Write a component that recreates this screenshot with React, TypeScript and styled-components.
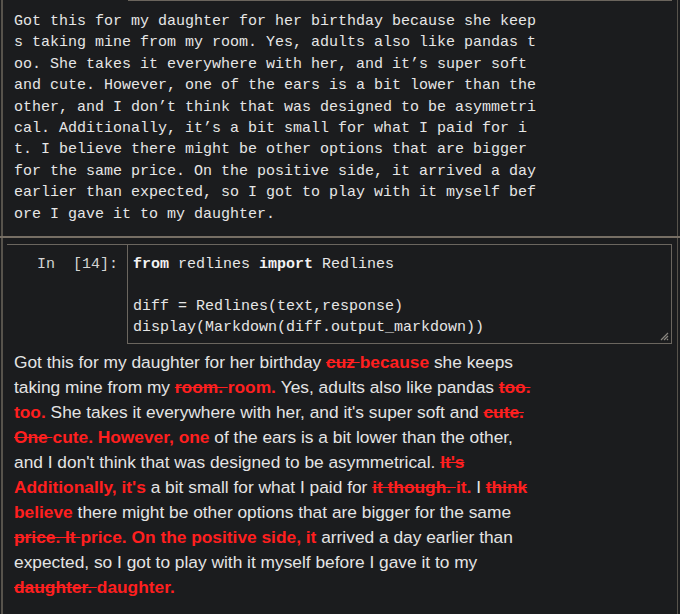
import styled, { createGlobalStyle } from "styled-components";

const GlobalStyle = createGlobalStyle`
  html, body {
    margin: 0;
    padding: 0;
    background: #1b1c1e;
  }
  body {
    width: 680px;
    height: 614px;
    overflow: hidden;
  }
`;

const Section = styled.div<{ $height: number }>`
  box-sizing: border-box;
  margin-left: 1px;
  width: 677px;
  height: ${(p) => p.$height}px;
  border-left: 2px solid #57534c;
  border-right: 1px solid #57534c;
  overflow: hidden;
`;

const PrevCellEdge = styled.div`
  margin-left: 125px;
  width: 544px;
  border-top: 1px solid #6b655d;
`;

const MonoOutput = styled.div`
  width: 58ch;
  padding: 10px 0 0 11px;
  font-family: "Liberation Mono", "DejaVu Sans Mono", monospace;
  font-size: 15px;
  line-height: 21.4px;
  color: #e6e6e6;
  word-break: break-all;
`;

const Separator = styled.div`
  height: 2px;
  background: #766e64;
`;

const InputRow = styled.div`
  display: flex;
  margin: 6px 0 0 4px;
`;

const Prompt = styled.div`
  box-sizing: border-box;
  width: 120px;
  padding: 9px 9px 0 0;
  border-top: 1px solid #6b665f;
  text-align: right;
  white-space: pre;
  font-family: "Liberation Mono", "DejaVu Sans Mono", monospace;
  font-size: 15px;
  line-height: 21px;
  color: #d4d4d4;
`;

const CodeBox = styled.div`
  position: relative;
  box-sizing: border-box;
  width: 545px;
  padding: 9px 6px 5px 5px;
  border: 1px solid #6b665f;
`;

const Code = styled.pre`
  margin: 0;
  font-family: "Liberation Mono", "DejaVu Sans Mono", monospace;
  font-size: 15px;
  line-height: 21px;
  color: #e6e6e6;
`;

const Keyword = styled.b`
  font-weight: 700;
  color: #f2f2f2;
`;

const ResizeGrip = styled.svg`
  position: absolute;
  right: 2px;
  bottom: 2px;
`;

const Markdown = styled.div`
  width: 528px;
  margin-top: 6px;
  padding-left: 11px;
  font-family: "Liberation Sans", Arial, sans-serif;
  font-size: 13pt;
  line-height: 25px;
  color: #e4e4e4;
`;

const Change = styled.span<{ $deleted?: boolean }>`
  color: #ff1f1f;
  font-weight: 700;
  text-decoration: ${(p) => (p.$deleted ? "line-through" : "none")};
`;

const review =
  "Got this for my daughter for her birthday because she keeps taking mine from my room. Yes, adults also like pandas too. She takes it everywhere with her, and it\u2019s super soft and cute. However, one of the ears is a bit lower than the other, and I don\u2019t think that was designed to be asymmetrical. Additionally, it\u2019s a bit small for what I paid for it. I believe there might be other options that are bigger for the same price. On the positive side, it arrived a day earlier than expected, so I got to play with it myself before I gave it to my daughter.";

type Piece = { text: string; kind?: "del" | "ins" };

const diff: Piece[] = [
  { text: "Got this for my daughter for her birthday " },
  { text: "cuz ", kind: "del" },
  { text: "because ", kind: "ins" },
  { text: "she keeps taking mine from my " },
  { text: "room. ", kind: "del" },
  { text: "room. ", kind: "ins" },
  { text: "Yes, adults also like pandas " },
  { text: "too. ", kind: "del" },
  { text: "too. ", kind: "ins" },
  { text: "She takes it everywhere with her, and it's super soft and " },
  { text: "cute. ", kind: "del" },
  { text: "One ", kind: "del" },
  { text: "cute. However, one ", kind: "ins" },
  {
    text: "of the ears is a bit lower than the other, and I don't think that was designed to be asymmetrical. ",
  },
  { text: "It's ", kind: "del" },
  { text: "Additionally, it's ", kind: "ins" },
  { text: "a bit small for what I paid for " },
  { text: "it though. ", kind: "del" },
  { text: "it. ", kind: "ins" },
  { text: "I " },
  { text: "think ", kind: "del" },
  { text: "believe ", kind: "ins" },
  { text: "there might be other options that are bigger for the same " },
  { text: "price. It ", kind: "del" },
  { text: "price. On the positive side, it ", kind: "ins" },
  {
    text: "arrived a day earlier than expected, so I got to play with it myself before I gave it to my ",
  },
  { text: "daughter. ", kind: "del" },
  { text: "daughter.", kind: "ins" },
];

export default function App() {
  return (
    <>
      <GlobalStyle />
      <Section $height={236}>
        <PrevCellEdge />
        <MonoOutput>{review}</MonoOutput>
      </Section>
      <Separator />
      <Section $height={376}>
        <InputRow>
          <Prompt>In  [14]:</Prompt>
          <CodeBox>
            <Code>
              <Keyword>from</Keyword> redlines <Keyword>import</Keyword> Redlines
              {"\n\n"}diff = Redlines(text,response){"\n"}
              display(Markdown(diff.output_markdown))
            </Code>
            <ResizeGrip width="9" height="9" viewBox="0 0 9 9">
              <path d="M1 8 L8 1 M4 8 L8 4 M7 8 L8 7" stroke="#8a8680" strokeWidth="1.2" />
            </ResizeGrip>
          </CodeBox>
        </InputRow>
        <Markdown>
          {diff.map((p, i) =>
            p.kind ? (
              <Change key={i} $deleted={p.kind === "del"}>
                {p.text}
              </Change>
            ) : (
              <span key={i}>{p.text}</span>
            )
          )}
        </Markdown>
      </Section>
    </>
  );
}
